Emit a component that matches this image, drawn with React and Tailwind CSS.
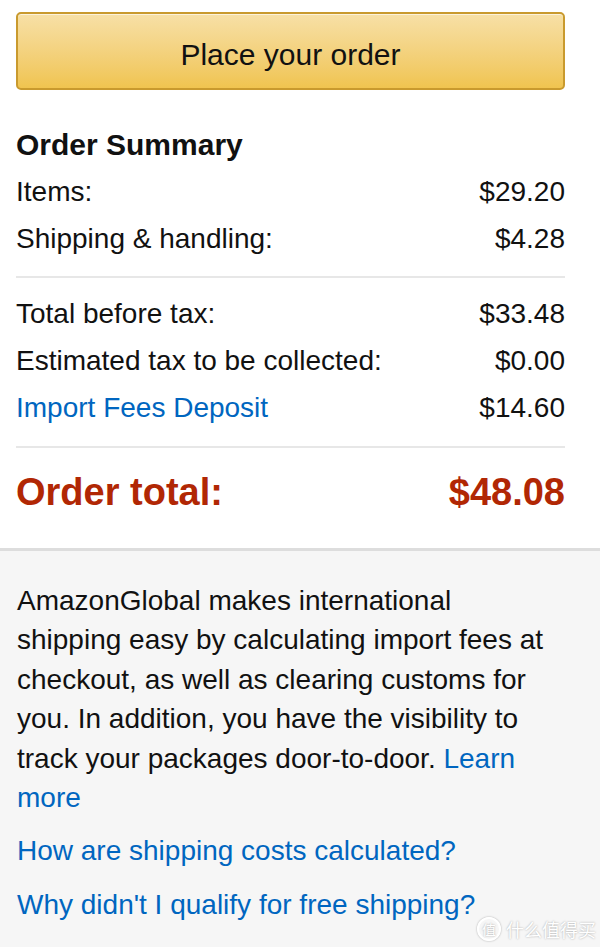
import React from "react";

const Row = ({ label, value, link }) => (
  <div className="flex justify-between h-[47px] leading-[47px] text-[28px]">
    <span className={link ? "text-[#0066c0]" : "text-[#111]"}>{label}</span>
    <span className="text-[#111]">{value}</span>
  </div>
);

export default function App() {
  return (
    <div
      className="relative w-[600px] h-[947px] bg-white overflow-hidden"
      style={{ fontFamily: '"Liberation Sans", Arial, sans-serif' }}
    >
      <div className="pl-[16px] pr-[35px] pt-[12px]">
        <button className="w-full h-[78px] pt-[6px] rounded-[5px] border-2 border-[#c99a2e] bg-gradient-to-b from-[#f7e0a6] to-[#f0c44f] text-[30px] text-[#111] flex items-center justify-center shadow-[inset_0_1px_0_rgba(255,255,255,0.6)]">
          Place your order
        </button>
        <div className="mt-[32px] text-[30px] font-bold text-[#111] leading-[46px]">
          Order Summary
        </div>
        <Row label="Items:" value="$29.20" />
        <Row label="Shipping & handling:" value="$4.28" />
        <div className="mt-[14px] h-[2px] bg-[#e7e7e7]" />
        <div className="mt-[12px]">
          <Row label="Total before tax:" value="$33.48" />
          <Row label="Estimated tax to be collected:" value="$0.00" />
          <Row label="Import Fees Deposit" value="$14.60" link />
        </div>
        <div className="mt-[15px] h-[2px] bg-[#e7e7e7]" />
        <div className="mt-[19px] flex justify-between text-[38px] font-bold text-[#b12704] leading-[50px]">
          <span>Order total:</span>
          <span>$48.08</span>
        </div>
      </div>
      <div className="mt-[31px] border-t-[3px] border-[#dddddd] bg-[#f6f6f6] h-[500px] pl-[17px] pr-[20px] pt-[30px]">
        <p className="text-[28px] leading-[39.4px] text-[#111] w-[545px]">
          AmazonGlobal makes international shipping easy by calculating import fees at checkout, as well as clearing customs for you. In addition, you have the visibility to track your packages door-to-door.{" "}
          <span className="text-[#0066c0]">Learn more</span>
        </p>
        <div className="mt-[14px] text-[28px] leading-[39.4px] text-[#0066c0]">
          How are shipping costs calculated?
        </div>
        <div className="mt-[14px] text-[28px] leading-[39.4px] text-[#0066c0]">
          Why didn't I qualify for free shipping?
        </div>
      </div>
      <div
        className="absolute left-[477px] top-[917px] flex items-center gap-[5px] text-white"
        style={{ textShadow: "0 0 2px rgba(0,0,0,0.35)", fontFamily: '"Noto Sans CJK SC", sans-serif' }}
      >
        <span className="w-[24px] h-[24px] rounded-full border-2 border-white flex items-center justify-center text-[14px] shadow-[0_0_2px_rgba(0,0,0,0.35)]">
          值
        </span>
        <span className="text-[18px] leading-[24px]">什么值得买</span>
      </div>
    </div>
  );
}
